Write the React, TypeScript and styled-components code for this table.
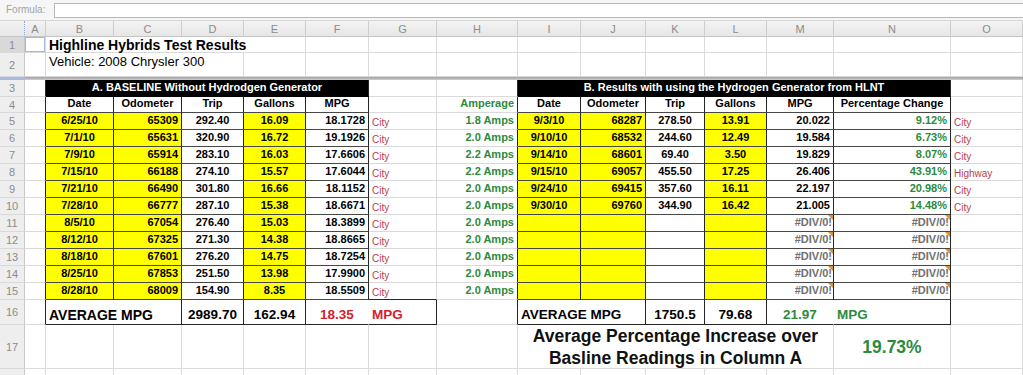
import React from "react";
import styled, { createGlobalStyle } from "styled-components";

const Global = createGlobalStyle`
  html, body { margin: 0; padding: 0; background: #fff; }
  body { font-family: "Liberation Sans", Arial, Helvetica, sans-serif; overflow: hidden; }
`;

type Align = "left" | "center" | "right";
const justify: Record<Align, string> = { left: "flex-start", center: "center", right: "flex-end" };

const DARK = "#262626";
const HLINE = "#474747";
const GRID = "#dadada";
const YELLOW = "#ffff00";
const GREEN = "#2d8a3c";
const RED = "#b8414e";
const RED_BOLD = "#d2222c";

const COLS = [21, 68, 68, 62, 62, 63, 68, 81, 63, 65, 59, 62, 67, 117, 72];
const LETTERS = "ABCDEFGHIJKLMNO".split("");

const Page = styled.div`
  width: 1023px;
  height: 375px;
  overflow: hidden;
  background: #fff;
`;

const FormulaBar = styled.div`
  height: 21px;
  box-sizing: border-box;
  display: flex;
  align-items: flex-start;
  gap: 9px;
  padding: 3px 0 0 6px;
  background: #f6f6f6;
  border-bottom: 1px solid #d6d6d6;
`;

const FormulaLabel = styled.span`
  font-size: 10px;
  line-height: 14px;
  color: #a3a3a3;
`;

const FormulaInput = styled.div`
  flex: 1;
  height: 13px;
  background: #fff;
  border: 1px solid #b8b8b8;
  border-right: none;
`;

const Sheet = styled.div`
  display: grid;
  grid-template-columns: 25px ${COLS.map((c) => `${c}px`).join(" ")};
  grid-template-rows: 16px 16px 24px 3px 17px 16px repeat(11, 17px) 25px 44px 20px;
`;

const HeadBase = styled.div`
  box-sizing: border-box;
  display: flex;
  align-items: center;
  justify-content: center;
  font-size: 11px;
  color: #8c8c8c;
`;

const CornerHead = styled(HeadBase)`
  background: linear-gradient(#f3f3f3, #e7e7e7);
  border-right: 1px dotted #8ea8dc;
  border-bottom: 1px solid #c4c4c4;
`;

const ColHead = styled(HeadBase)`
  background: linear-gradient(#f4f4f4, #e6e6e6);
  border-right: 1px solid #cdcdcd;
  border-bottom: 1px solid #c4c4c4;
`;

const RowHead = styled(HeadBase)<{ $sel?: boolean }>`
  background: ${(p) => (p.$sel ? "#d9d9d9" : "#eeeeee")};
  border-right: 1px solid #c8c8c8;
  border-bottom: 1px solid #d9d9d9;
`;

const FreezeHead = styled.div`
  background: #a7bbe2;
`;

const FreezeLine = styled.div`
  grid-column: span 15;
  background: linear-gradient(#9f9f9f, #cfcfcf);
`;

type CellProps = {
  $span?: number;
  $rb?: string;
  $bb?: string;
  $bg?: string;
  $align?: Align;
  $color?: string;
};

const Cell = styled.div<CellProps>`
  position: relative;
  box-sizing: border-box;
  min-width: 0;
  grid-column: span ${(p) => p.$span ?? 1};
  display: flex;
  align-items: center;
  justify-content: ${(p) => justify[p.$align ?? "left"]};
  padding: 0 3px;
  background: ${(p) => p.$bg ?? "#fff"};
  color: ${(p) => p.$color ?? "#000"};
  border-right: 1px solid ${(p) => p.$rb ?? GRID};
  border-bottom: 1px solid ${(p) => p.$bb ?? GRID};
  font-size: 11px;
  line-height: 13px;
  white-space: nowrap;
`;

const SelCell = styled(Cell)`
  box-shadow: inset 0 0 0 1px #a3b9e4;
`;

const TitleCell = styled(Cell)<{ $size: number; $bold?: boolean; $top?: boolean }>`
  font-size: ${(p) => p.$size}px;
  line-height: ${(p) => p.$size + 2}px;
  font-weight: ${(p) => (p.$bold ? 700 : 400)};
  align-items: ${(p) => (p.$top ? "flex-start" : "center")};
  padding-top: ${(p) => (p.$top ? "1px" : "0")};
`;

const BandCell = styled(Cell)`
  background: #000;
  color: #fff;
  font-weight: 700;
  justify-content: center;
  border-right-color: ${DARK};
  border-bottom-color: #000;
  padding-bottom: 1px;
`;

const HeadCell = styled(Cell)`
  font-weight: 700;
  justify-content: center;
  border-right-color: ${DARK};
  border-bottom-color: ${HLINE};
  padding-bottom: 2px;
`;

const DataCell = styled(Cell)`
  font-weight: 700;
  border-right-color: ${DARK};
  border-bottom-color: ${HLINE};
  padding-bottom: 2px;
`;

const AmpCell = styled(Cell)`
  font-weight: 700;
  color: ${GREEN};
  justify-content: flex-end;
  border-right-color: ${DARK};
  padding-bottom: 2px;
`;

const PctCell = styled(DataCell)`
  color: ${GREEN};
  justify-content: flex-end;
`;

const ErrCell = styled(DataCell)`
  color: #707070;
  justify-content: flex-end;
  padding-right: 1px;
`;

const Flag = styled.span`
  position: absolute;
  top: 0;
  right: 0;
  width: 0;
  height: 0;
  border-left: 5px solid transparent;
  border-top: 5px solid #e0902e;
`;

const NoteCell = styled(Cell)`
  font-size: 10px;
  line-height: 12px;
  color: ${RED};
  align-items: flex-end;
  padding-bottom: 0;
  overflow: visible;
`;

const TotalCell = styled(Cell)<{ $size?: number }>`
  font-size: ${(p) => p.$size ?? 13.5}px;
  line-height: 16px;
  font-weight: 700;
  align-items: flex-end;
  padding-bottom: 1px;
  border-right-color: ${(p) => p.$rb ?? DARK};
  border-bottom-color: ${DARK};
`;

const SummaryCell = styled(Cell)`
  font-size: 17.5px;
  line-height: 22px;
  font-weight: 700;
  justify-content: center;
  text-align: center;
  white-space: normal;
  color: ${(p) => p.$color ?? "#111"};
  padding: 0;
`;

type RowA = { date: string; odo: string; trip: string; gal: string; mpg: string };
type RowB = RowA & { pct: string; note: string };

const tableA: RowA[] = [
  { date: "6/25/10", odo: "65309", trip: "292.40", gal: "16.09", mpg: "18.1728" },
  { date: "7/1/10", odo: "65631", trip: "320.90", gal: "16.72", mpg: "19.1926" },
  { date: "7/9/10", odo: "65914", trip: "283.10", gal: "16.03", mpg: "17.6606" },
  { date: "7/15/10", odo: "66188", trip: "274.10", gal: "15.57", mpg: "17.6044" },
  { date: "7/21/10", odo: "66490", trip: "301.80", gal: "16.66", mpg: "18.1152" },
  { date: "7/28/10", odo: "66777", trip: "287.10", gal: "15.38", mpg: "18.6671" },
  { date: "8/5/10", odo: "67054", trip: "276.40", gal: "15.03", mpg: "18.3899" },
  { date: "8/12/10", odo: "67325", trip: "271.30", gal: "14.38", mpg: "18.8665" },
  { date: "8/18/10", odo: "67601", trip: "276.20", gal: "14.75", mpg: "18.7254" },
  { date: "8/25/10", odo: "67853", trip: "251.50", gal: "13.98", mpg: "17.9900" },
  { date: "8/28/10", odo: "68009", trip: "154.90", gal: "8.35", mpg: "18.5509" },
];

const amps = ["1.8", "2.0", "2.2", "2.2", "2.0", "2.0", "2.0", "2.0", "2.0", "2.0", "2.0"];

const tableB: RowB[] = [
  { date: "9/3/10", odo: "68287", trip: "278.50", gal: "13.91", mpg: "20.022", pct: "9.12%", note: "City" },
  { date: "9/10/10", odo: "68532", trip: "244.60", gal: "12.49", mpg: "19.584", pct: "6.73%", note: "City" },
  { date: "9/14/10", odo: "68601", trip: "69.40", gal: "3.50", mpg: "19.829", pct: "8.07%", note: "City" },
  { date: "9/15/10", odo: "69057", trip: "455.50", gal: "17.25", mpg: "26.406", pct: "43.91%", note: "Highway" },
  { date: "9/24/10", odo: "69415", trip: "357.60", gal: "16.11", mpg: "22.197", pct: "20.98%", note: "City" },
  { date: "9/30/10", odo: "69760", trip: "344.90", gal: "16.42", mpg: "21.005", pct: "14.48%", note: "City" },
];

const blanks = (n: number, key: string) =>
  Array.from({ length: n }, (_, i) => <Cell key={`${key}-${i}`} />);

export default function App() {
  return (
    <Page>
      <Global />
      <FormulaBar>
        <FormulaLabel>Formula:</FormulaLabel>
        <FormulaInput />
      </FormulaBar>
      <Sheet>
        <CornerHead />
        {LETTERS.map((l) => (
          <ColHead key={l}>{l}</ColHead>
        ))}

        <RowHead $sel>1</RowHead>
        <SelCell />
        <TitleCell $span={4} $size={14} $bold>
          Highline Hybrids Test Results
        </TitleCell>
        {blanks(10, "r1")}

        <RowHead>2</RowHead>
        <Cell />
        <TitleCell $span={3} $size={13} $top>
          Vehicle: 2008 Chrysler 300
        </TitleCell>
        {blanks(11, "r2")}

        <FreezeHead />
        <FreezeLine />

        <RowHead>3</RowHead>
        <Cell $rb={DARK} />
        <BandCell $span={5}>A. BASELINE Without Hydrodgen Generator</BandCell>
        <Cell />
        <Cell $rb={DARK} />
        <BandCell $span={6}>B. Results with using the Hydrogen Generator from HLNT</BandCell>
        <Cell />

        <RowHead>4</RowHead>
        <Cell $rb={DARK} />
        {["Date", "Odometer", "Trip", "Gallons", "MPG"].map((h) => (
          <HeadCell key={`a-${h}`}>{h}</HeadCell>
        ))}
        <Cell />
        <AmpCell>Amperage</AmpCell>
        {["Date", "Odometer", "Trip", "Gallons", "MPG", "Percentage Change"].map((h) => (
          <HeadCell key={`b-${h}`}>{h}</HeadCell>
        ))}
        <Cell />

        {tableA.map((a, i) => {
          const b = tableB[i];
          const last = i === tableA.length - 1;
          const bb = last ? DARK : undefined;
          return (
            <React.Fragment key={`row-${i}`}>
              <RowHead>{i + 5}</RowHead>
              <Cell $rb={DARK} />
              <DataCell $bg={YELLOW} $align="center" $bb={bb}>{a.date}</DataCell>
              <DataCell $bg={YELLOW} $align="right" $bb={bb}>{a.odo}</DataCell>
              <DataCell $align="center" $bb={bb}>{a.trip}</DataCell>
              <DataCell $bg={YELLOW} $align="center" $bb={bb}>{a.gal}</DataCell>
              <DataCell $align="right" $bb={bb}>{a.mpg}</DataCell>
              <NoteCell $bb={bb}>City</NoteCell>
              <AmpCell>{amps[i]} Amps</AmpCell>
              <DataCell $bg={YELLOW} $align="center" $bb={bb}>{b?.date}</DataCell>
              <DataCell $bg={YELLOW} $align="right" $bb={bb}>{b?.odo}</DataCell>
              <DataCell $align="center" $bb={bb}>{b?.trip}</DataCell>
              <DataCell $bg={YELLOW} $align="center" $bb={bb}>{b?.gal}</DataCell>
              {b ? (
                <DataCell $align="right" $bb={bb}>{b.mpg}</DataCell>
              ) : (
                <ErrCell $bb={bb}>
                  #DIV/0!
                  <Flag />
                </ErrCell>
              )}
              {b ? (
                <PctCell $bb={bb}>{b.pct}</PctCell>
              ) : (
                <ErrCell $bb={bb}>
                  #DIV/0!
                  <Flag />
                </ErrCell>
              )}
              <NoteCell>{b?.note}</NoteCell>
            </React.Fragment>
          );
        })}

        <RowHead>16</RowHead>
        <Cell $rb={DARK} />
        <TotalCell $span={2} $size={14}>AVERAGE MPG</TotalCell>
        <TotalCell $align="center">2989.70</TotalCell>
        <TotalCell $align="center">162.94</TotalCell>
        <TotalCell $align="center" $color={RED_BOLD} $rb="#fff">18.35</TotalCell>
        <TotalCell $color={RED_BOLD}>MPG</TotalCell>
        <Cell $rb={DARK} />
        <TotalCell $span={2}>AVERAGE MPG</TotalCell>
        <TotalCell $align="center">1750.5</TotalCell>
        <TotalCell $align="center">79.68</TotalCell>
        <TotalCell $align="center" $color={GREEN} $rb="#fff">21.97</TotalCell>
        <TotalCell $color={GREEN}>MPG</TotalCell>
        <Cell />

        <RowHead>17</RowHead>
        {blanks(8, "r17")}
        <SummaryCell $span={5}>
          Average Percentage Increase over
          <br />
          Basline Readings in Column A
        </SummaryCell>
        <SummaryCell $color={GREEN}>19.73%</SummaryCell>
        <Cell />

        <RowHead />
        {blanks(15, "r18")}
      </Sheet>
    </Page>
  );
}
